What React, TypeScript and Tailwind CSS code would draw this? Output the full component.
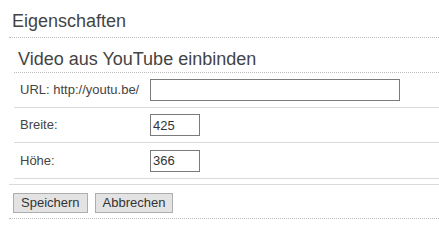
export default function App() {
  return (
    <div
      className="min-h-[238px] bg-white pl-[9px] pt-[11px] text-[#444]"
      style={{ fontFamily: '"Liberation Sans", Arial, sans-serif' }}
    >
      {/* Panel title */}
      <h2 className="border-b border-dotted border-[#bbb] pb-[6px] pl-[3px] text-[18px] leading-[20px] font-normal">
        Eigenschaften
      </h2>

      {/* Form */}
      <div className="ml-[5px]">
        <h3 className="border-b border-dotted border-[#bbb] pt-[11px] pb-[3px] pl-[4px] text-[18px] leading-[20px] font-normal">
          Video aus YouTube einbinden
        </h3>

        <div className="flex h-[35px] items-center border-b border-[#dadada] pl-[6px] text-[13px]">
          <label className="w-[130px]">URL: http://youtu.be/</label>
          <input
            type="text"
            className="h-[22px] w-[250px] border border-[#7a7a7a] px-[2px] text-[13px] text-[#333] outline-none"
          />
        </div>

        <div className="flex h-[35px] items-center border-b border-[#dadada] pl-[6px] text-[13px]">
          <label className="w-[130px]">Breite:</label>
          <input
            type="text"
            defaultValue="425"
            className="h-[22px] w-[50px] border border-[#7a7a7a] px-[2px] text-[13px] text-[#333] outline-none"
          />
        </div>

        <div className="flex h-[36px] items-center border-b border-[#dadada] pl-[6px] text-[13px]">
          <label className="w-[130px]">Höhe:</label>
          <input
            type="text"
            defaultValue="366"
            className="h-[22px] w-[50px] border border-[#7a7a7a] px-[2px] text-[13px] text-[#333] outline-none"
          />
        </div>
      </div>

      {/* Actions */}
      <div className="mt-[5px] flex gap-[7px] border-t border-b border-t-[#dadada] border-b-[#bbb] [border-bottom-style:dotted] pt-[8px] pb-[5px] pl-[4px]">
        <button className="h-[20px] border border-[#adadad] bg-[#e3e3e3] px-[7px] text-[13px] leading-[18px] text-[#333]">
          Speichern
        </button>
        <button className="h-[20px] border border-[#adadad] bg-[#e3e3e3] px-[7px] text-[13px] leading-[18px] text-[#333]">
          Abbrechen
        </button>
      </div>
    </div>
  )
}
